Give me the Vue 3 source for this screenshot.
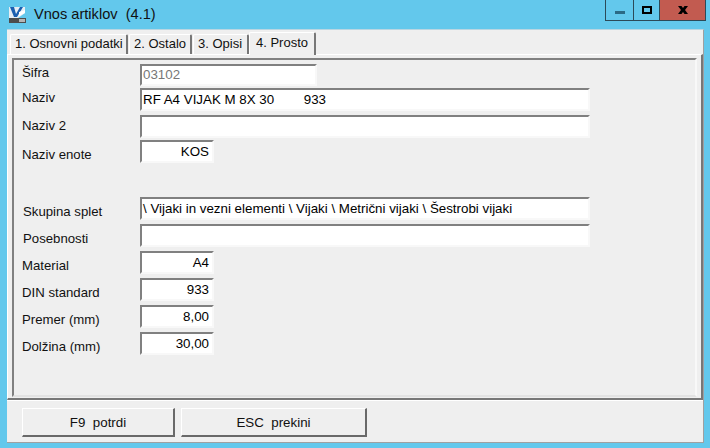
<script setup>
const rows = [
  { label: 'Šifra', value: '03102', size: 'code', muted: true, top: 0, shift: -3 },
  { label: 'Naziv', value: 'RF A4 VIJAK M 8X 30        933', size: 'wide', top: 2, shift: -2 },
  { label: 'Naziv 2', value: '', size: 'wide', top: 4, shift: -1 },
  { label: 'Naziv enote', value: 'KOS', size: 'short', top: 2, shift: 3 },
  { label: 'Skupina splet', value: '\\ Vijaki in vezni elementi \\ Vijaki \\ Metrični vijaki \\ Šestrobi vijaki', size: 'wide', top: 34, shift: 3, indent: 1 },
  { label: 'Posebnosti', value: '', size: 'wide', top: 4, shift: 3, indent: 1 },
  { label: 'Material', value: 'A4', size: 'short', top: 4, shift: 3 },
  { label: 'DIN standard', value: '933', size: 'short', top: 4, shift: 3 },
  { label: 'Premer (mm)', value: '8,00', size: 'short', top: 4, shift: 3 },
  { label: 'Dolžina (mm)', value: '30,00', size: 'short', top: 4, shift: 3 },
]
const tabs = [
  { text: '1. Osnovni podatki', width: 118 },
  { text: '2. Ostalo', width: 63 },
  { text: '3. Opisi', width: 56 },
  { text: '4. Prosto', width: 67 },
]
</script>

<template>
  <div class="window">
    <header class="titlebar">
      <svg class="logo" width="17" height="17" viewBox="0 0 17 17">
        <path d="M0 1h16v6L9 12H0z" fill="#e6edf4" />
        <path d="M1 1h4l2 7 4-7h3l-6 10H5z" fill="#1b5fb0" />
        <path d="M10 6l6-2v3l-6 3z" fill="#fff" />
        <rect x="0" y="12" width="17" height="5" fill="#4d4d4d" />
        <rect x="10" y="13" width="6" height="3" fill="#b5b5b5" />
      </svg>
      <span class="title">Vnos artiklov&nbsp; (4.1)</span>
      <div class="controls">
        <button class="ctl min"><i></i></button>
        <button class="ctl max"><i></i></button>
        <button class="ctl close">
          <svg width="10" height="8" viewBox="0 0 10 8"><path d="M0 0h3.500l1.500 2 1.500-2H10L7 4l3 4H6.500L5 6 3.500 8H0l3-4z" fill="#000" /></svg>
        </button>
      </div>
    </header>
    <main class="client">
      <nav class="tabs">
        <div
          v-for="(t, i) in tabs"
          :key="t.text"
          class="tab"
          :class="{ active: i === 3 }"
          :style="{ width: t.width + 'px' }"
        >{{ t.text }}</div>
      </nav>
      <section class="page">
        <div class="group">
          <div v-for="r in rows" :key="r.label" class="row" :class="r.size" :style="{ marginTop: r.top + 'px' }">
            <label class="label" :class="{ indent: r.indent }" :style="{ transform: `translateY(${r.shift}px)` }">{{ r.label }}</label>
            <div class="input" :class="[r.size, { muted: r.muted }]">{{ r.value }}</div>
          </div>
        </div>
      </section>
      <footer class="footer">
        <button class="btn first">F9&nbsp; potrdi</button>
        <button class="btn second">ESC&nbsp; prekini</button>
      </footer>
    </main>
  </div>
</template>

<style>
html, body { margin: 0; background: #63c8ec; }
</style>

<style scoped>
.window {
  width: 710px;
  height: 448px;
  background: #63c8ec;
  font-family: "Liberation Sans", Arial, sans-serif;
  font-size: 13px;
  color: #000;
  display: flex;
  flex-direction: column;
  overflow: hidden;
  box-sizing: border-box;
}
.titlebar {
  height: 29px;
  flex: none;
  display: flex;
  align-items: flex-start;
  position: relative;
}
.logo { margin: 6px 0 0 9px; }
.title { font-size: 14.6px; margin: 6px 0 0 8px; color: #111; white-space: pre; }
.controls {
  margin-left: auto;
  margin-right: 4px;
  display: flex;
  height: 21px;
  border: 1px solid #2c4a58;
  border-top: 0;
  box-sizing: border-box;
}
.ctl {
  border: 0;
  padding: 0;
  background: transparent;
  display: flex;
  align-items: center;
  justify-content: center;
  height: 20px;
}
.ctl + .ctl { border-left: 1px solid #2c4a58; }
.min { width: 27px; }
.min i { display: block; width: 10px; height: 3px; background: #2b6a85; margin-top: 5px; }
.max { width: 26px; }
.max i { display: block; width: 6px; height: 4px; border: 2px solid #000; }
.close { width: 46px; background: #c25b50; }
.client {
  margin: 0 6px 5px 7px;
  flex: 1;
  background: #efefef;
  border-top: 1px solid #b9d6e2;
  border-right: 1px solid #a0a0a0;
  border-bottom: 1px solid #a0a0a0;
  display: flex;
  flex-direction: column;
  min-height: 0;
}
.tabs {
  display: flex;
  padding: 0 0 0 3px;
  height: 24px;
  box-sizing: border-box;
  flex: none;
  align-items: flex-end;
}
.tab {
  height: 20px;
  line-height: 18px;
  padding: 0 0 0 4px;
  margin-right: 1px;
  box-sizing: border-box;
  border-top: 1px solid #fff;
  border-left: 1px solid #fff;
  border-right: 2px solid #777;
  border-top-left-radius: 2px;
  border-top-right-radius: 2px;
  white-space: nowrap;
  color: #111;
}
.tab.active {
  height: 23px;
  line-height: 20px;
  padding: 0 0 0 6px;
  margin-left: -1px;
  background: #efefef;
  position: relative;
  z-index: 1;
  margin-bottom: -1px;
}
.page {
  flex: 1;
  min-height: 0;
  display: flex;
  flex-direction: column;
  border-top: 1px solid #fff;
  border-bottom: 2px solid #777;
  border-right: 2px solid #777;
  border-left: 1px solid #fff;
  padding: 3px 4px 1px 4px;
  box-sizing: border-box;
}
.group {
  flex: 1;
  border-top: 2px solid #808080;
  border-left: 2px solid #808080;
  border-right: 2px solid #f8f8f8;
  border-bottom: 2px solid #e2e2e2;
  padding: 4px 0 0 8px;
  box-sizing: border-box;
}
.row {
  display: flex;
  align-items: center;
  height: 23px;
}
.row.code { height: 22px; }
.label {
  width: 118px;
  flex: none;
  font-size: 13.2px;
  color: #111;
}
.label.indent { padding-left: 1px; width: 117px; }
.input {
  height: 100%;
  box-sizing: border-box;
  background: #fff;
  border-top: 2px solid #808080;
  border-left: 2px solid #808080;
  border-right: 2px solid #f8f8f8;
  border-bottom: 2px solid #f8f8f8;
  font-size: 13.33px;
  line-height: 20px;
  padding: 0 3px 0 1px;
  white-space: pre;
  overflow: hidden;
  color: #000;
}
.input.code { width: 177px; line-height: 17px; }
.input.wide { width: 450px; }
.input.short { width: 74px; text-align: right; }
.input.muted { color: #777; }
.footer {
  flex: 0 0 42px;
  display: flex;
  gap: 6px;
  padding: 7px 0 0 15px;
  box-sizing: border-box;
  border-top: 1px solid #fff;
}
.btn {
  height: 29px;
  font: inherit;
  font-size: 13.33px;
  color: #111;
  background: #efefef;
  border-top: 1px solid #fff;
  border-left: 1px solid #fff;
  border-right: 2px solid #696969;
  border-bottom: 2px solid #696969;
  padding: 0;
}
.first { width: 153px; }
.second { width: 186px; }
</style>
